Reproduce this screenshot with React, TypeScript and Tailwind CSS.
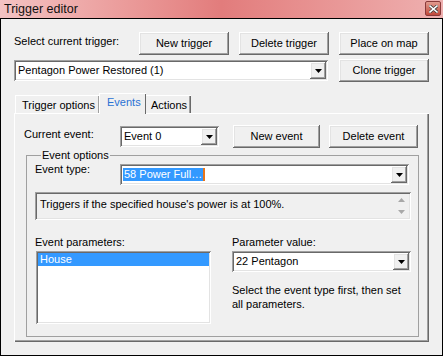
import React from "react";

const raised =
  "shadow-[inset_-1px_-1px_#696969,inset_1px_1px_#ffffff,inset_-2px_-2px_#a0a0a0,inset_2px_2px_#e3e3e3]";
const sunken =
  "shadow-[inset_1px_1px_#a0a0a0,inset_-1px_-1px_#ffffff,inset_2px_2px_#696969,inset_-2px_-2px_#e3e3e3]";

function Button({ label, className = "" }: { label: string; className?: string }) {
  return (
    <div className={`h-[23px] flex items-center justify-center bg-[#f0f0f0] text-black ${raised} ${className}`}>
      {label}
    </div>
  );
}

function Arrow({ color = "#000" }: { color?: string }) {
  return (
    <svg width="7" height="4" viewBox="0 0 7 4">
      <polygon points="0,0 7,0 3.5,4" fill={color} />
    </svg>
  );
}

function Combo({
  text,
  className = "",
  selected = false,
}: {
  text: string;
  className?: string;
  selected?: boolean;
}) {
  return (
    <div className={`h-[21px] flex bg-white p-[2px] ${sunken} ${className}`}>
      <div className="flex-1 flex items-center pl-[1px] overflow-hidden whitespace-nowrap">
        {selected ? (
          <span className="bg-[#3399ff] text-white pl-[1px] pr-[1px] border-r-2 border-[#e8751a]">{text}</span>
        ) : (
          <span className="pl-[1px]">{text}</span>
        )}
      </div>
      <div className={`w-[16px] flex items-center justify-center bg-[#f0f0f0] ${raised}`}>
        <Arrow />
      </div>
    </div>
  );
}

function CloseGlyph() {
  return (
    <svg width="9" height="8" viewBox="0 0 9 8">
      <path d="M1 1 L8 7 M8 1 L1 7" stroke="#3a3a3a" strokeWidth="3" strokeLinecap="square" />
      <path d="M1 1 L8 7 M8 1 L1 7" stroke="#ffffff" strokeWidth="1.6" strokeLinecap="square" />
    </svg>
  );
}

export default function App() {
  return (
    <div className="w-[443px] h-[357px] flex flex-col bg-white font-['Liberation_Sans',Arial,sans-serif] text-[11px] leading-[13px] text-black">
      {/* title bar */}
      <div className="h-[18px] flex items-start justify-between bg-gradient-to-r from-[#f3c3c3] via-[#e27c7c] to-[#eeb0b0]">
        <span className="pl-[4px] pt-[2px] text-[12.5px] leading-[14px] text-[#101010]">Trigger editor</span>
        <div className="mt-[1px] mr-[2px] w-[16px] h-[15px] flex items-center justify-center rounded-[2px] border border-[#8a3a3a] bg-gradient-to-b from-[#e19a8f] to-[#c0473a]">
          <CloseGlyph />
        </div>
      </div>

      {/* window body */}
      <div className="h-[338px] border border-black bg-[#f0f0f0] px-[13px] pt-[13px]">
        <div className="h-[23px] flex items-center">
          <span className="flex-1 pb-[4px]">Select current trigger:</span>
          <div className="flex gap-[10px]">
            <Button label="New trigger" className="w-[90px]" />
            <Button label="Delete trigger" className="w-[90px]" />
            <Button label="Place on map" className="w-[90px]" />
          </div>
        </div>

        <div className="mt-[4px] flex items-center justify-between">
          <Combo text="Pentagon Power Restored (1)" className="w-[314px]" />
          <Button label="Clone trigger" className="w-[90px]" />
        </div>

        {/* tabs */}
        <div className="mt-[11px] h-[20px] flex items-end pl-[1px]">
          <div className="h-[18px] w-[84px] pl-[6px] pt-[3px] border-t border-l border-white shadow-[inset_-1px_0_#a0a0a0]">
            Trigger options
          </div>
          <div className="relative z-10 -mb-[1px] h-[21px] w-[47px] pl-[7px] pt-[2px] bg-[#f0f0f0] border-t border-l border-white shadow-[inset_-1px_0_#696969] text-[#2a72d4]">
            Events
          </div>
          <div className="h-[18px] w-[45px] pl-[5px] pt-[3px] border-t border-white shadow-[inset_-1px_0_#696969,inset_-2px_0_#a0a0a0]">
            Actions
          </div>
        </div>

        {/* tab panel */}
        <div className="h-[229px] w-[415px] pl-[10px] pt-[12px] shadow-[inset_1px_1px_#ffffff,inset_-1px_-1px_#696969,inset_-2px_-2px_#a0a0a0]">
          <div className="flex items-center">
            <span className="w-[96px] pb-[4px]">Current event:</span>
            <Combo text="Event 0" className="w-[99px]" />
            <Button label="New event" className="ml-[14px] w-[87px]" />
            <Button label="Delete event" className="ml-[9px] w-[89px]" />
          </div>

          <fieldset className="mt-[1px] ml-[2px] w-[393px] h-[188px] border border-[#a0a0a0] pl-[8px]">
            <legend className="ml-[6px] px-[1px]">Event options</legend>

            <div className="mt-[2px] flex items-start">
              <span className="w-[85px] -mt-[1px]">Event type:</span>
              <Combo text="58 Power Full…" selected className="w-[289px]" />
            </div>

            <div className={`mt-[7px] w-[376px] h-[28px] flex bg-[#f0f0f0] ${sunken}`}>
              <div className="flex-1 pl-[5px] pt-[6px]">Triggers if the specified house's power is at 100%.</div>
              <div className="w-[16px] mr-[2px] my-[2px] flex flex-col items-center justify-between py-[4px]">
                <svg width="7" height="4" viewBox="0 0 7 4">
                  <polygon points="0,4 7,4 3.5,0" fill="#a8a8a8" />
                </svg>
                <Arrow color="#a8a8a8" />
              </div>
            </div>

            <div className="mt-[16px] flex">
              <div className="w-[197px] flex flex-col">
                <span>Event parameters:</span>
                <div className={`mt-[2px] ml-[1px] w-[175px] h-[73px] bg-white p-[2px] ${sunken}`}>
                  <div className="h-[13px] bg-[#3399ff] text-white pl-[2px]">House</div>
                </div>
              </div>
              <div className="flex flex-col">
                <span>Parameter value:</span>
                <Combo text="22 Pentagon" className="mt-[2px] w-[179px]" />
                <p className="mt-[11px] leading-[14px]">
                  Select the event type first, then set
                  <br />
                  all parameters.
                </p>
              </div>
            </div>
          </fieldset>
        </div>
      </div>
    </div>
  );
}
